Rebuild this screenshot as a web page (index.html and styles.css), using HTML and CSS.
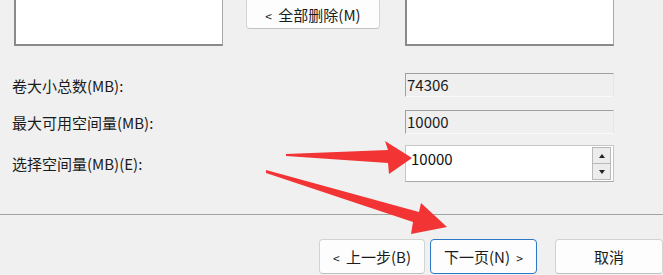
FILE: index.html
```html
<!DOCTYPE html>
<html lang="zh-CN">
<head>
<meta charset="utf-8">
<title>新建简单卷</title>
<link rel="stylesheet" href="styles.css">
</head>
<body>
<div class="dialog">
  <div class="lists">
    <div class="listbox left"></div>
    <button class="btn remove"><span class="lt">&lt;</span> 全部删除(M)</button>
    <div class="listbox right"></div>
  </div>
  <div class="form">
    <div class="row r1">
      <span class="label">卷大小总数(MB):</span>
      <div class="field">74306</div>
    </div>
    <div class="row r2">
      <span class="label">最大可用空间量(MB):</span>
      <div class="field">10000</div>
    </div>
    <div class="row r3">
      <span class="label">选择空间量(MB)(E):</span>
      <div class="spin">
        <span class="val">10000</span>
        <div class="spinbtns">
          <div class="sb"><span class="tri up"></span></div>
          <div class="sb"><span class="tri down"></span></div>
        </div>
      </div>
    </div>
  </div>
  <div class="sep"></div>
  <div class="buttons">
    <button class="btn nav"><span class="lt">&lt;</span> 上一步(B)</button>
    <button class="btn nav next">下一页(N) <span class="lt">&gt;</span></button>
    <button class="btn nav cancel">取消</button>
  </div>
  <svg class="arrows" width="663" height="275" viewBox="0 0 663 275">
    <polygon points="286,154 388,150 385,141 412,158 389,174 388,163 286,156" />
    <polygon points="266,170 419,212 421,203 447,227 411,234 413,222 266,173" />
  </svg>
</div>
</body>
</html>
```
FILE: styles.css
```css
html, body {
  margin: 0;
  padding: 0;
  background: #f0f0f0;
  overflow: hidden;
}
.dialog {
  position: relative;
  width: 663px;
  height: 275px;
  overflow: hidden;
  font-family: "Noto Sans CJK SC", "Liberation Sans", sans-serif;
  font-size: 15px;
  color: #1b1b1b;
}
.lists {
  display: flex;
  align-items: flex-start;
  margin-top: -40px;
  height: 86px;
}
.listbox {
  box-sizing: border-box;
  width: 209px;
  height: 86px;
  background: #ffffff;
  border: 1px solid #a8a8a8;
  border-left: 2px solid #8a8a8a;
  border-bottom: 2px solid #8a8a8a;
}
.listbox.left {
  margin-left: 14px;
}
.listbox.right {
  margin-left: 25px;
}
.btn {
  box-sizing: border-box;
  font-family: "Noto Sans CJK SC", "Liberation Sans", sans-serif;
  font-size: 15px;
  color: #1b1b1b;
  background: #fdfdfd;
  border: 1px solid #d3d3d3;
  border-bottom-color: #c2c2c2;
  border-radius: 4px;
  padding: 0;
  white-space: pre;
}
.lt {
  font-size: 12px;
  margin-right: 3px;
}
.next .lt {
  margin-right: 0;
  margin-left: 3px;
}
.remove {
  margin-left: 23px;
  margin-top: 38px;
  width: 134px;
  height: 31px;
  padding-top: 2px;
}
.form {
  padding-left: 12px;
  margin-top: 27px;
}
.row {
  display: flex;
  align-items: center;
}
.label {
  width: 393px;
}
.field {
  box-sizing: border-box;
  width: 209px;
  height: 24px;
  line-height: 22px;
  padding-left: 1px;
  font-size: 15px;
  background: #efefef;
  border-top: 1px solid #a0a0a0;
  border-left: 1px solid #a0a0a0;
  border-right: 1px solid #e6e6e6;
  border-bottom: 1px solid #fafafa;
}
.r2 {
  margin-top: 13px;
}
.r3 {
  margin-top: 11px;
}
.spin {
  box-sizing: border-box;
  display: flex;
  justify-content: space-between;
  width: 209px;
  height: 37px;
  background: #ffffff;
  border: 1px solid #c6c6c6;
  border-bottom-color: #a8a8a8;
}
.val {
  padding-left: 5px;
  padding-top: 3px;
  line-height: 20px;
  font-size: 15px;
  color: #111;
}
.spinbtns {
  display: flex;
  flex-direction: column;
  width: 19px;
  margin: 1px 2px 1px 0;
}
.sb {
  box-sizing: border-box;
  flex: 1;
  display: flex;
  align-items: center;
  justify-content: center;
  background: #ececec;
  border: 1px solid #b9b9b9;
}
.sb + .sb {
  border-top: none;
}
.tri {
  width: 0;
  height: 0;
  border-left: 3px solid transparent;
  border-right: 3px solid transparent;
}
.tri.up {
  border-bottom: 4px solid #222;
}
.tri.down {
  border-top: 4px solid #222;
}
.sep {
  margin-top: 32px;
  height: 1px;
  background: #a3a3a3;
}
.buttons {
  display: flex;
  gap: 5px;
  margin-top: 24px;
  padding-left: 319px;
}
.nav {
  width: 106px;
  height: 35px;
}
.next {
  width: 107px;
  border: 1px solid #2a78c6;
}
.cancel {
  width: 108px;
  margin-left: 13px;
}
.arrows {
  position: absolute;
  left: 0;
  top: 0;
  pointer-events: none;
}
.arrows polygon {
  fill: #f23434;
}
```
